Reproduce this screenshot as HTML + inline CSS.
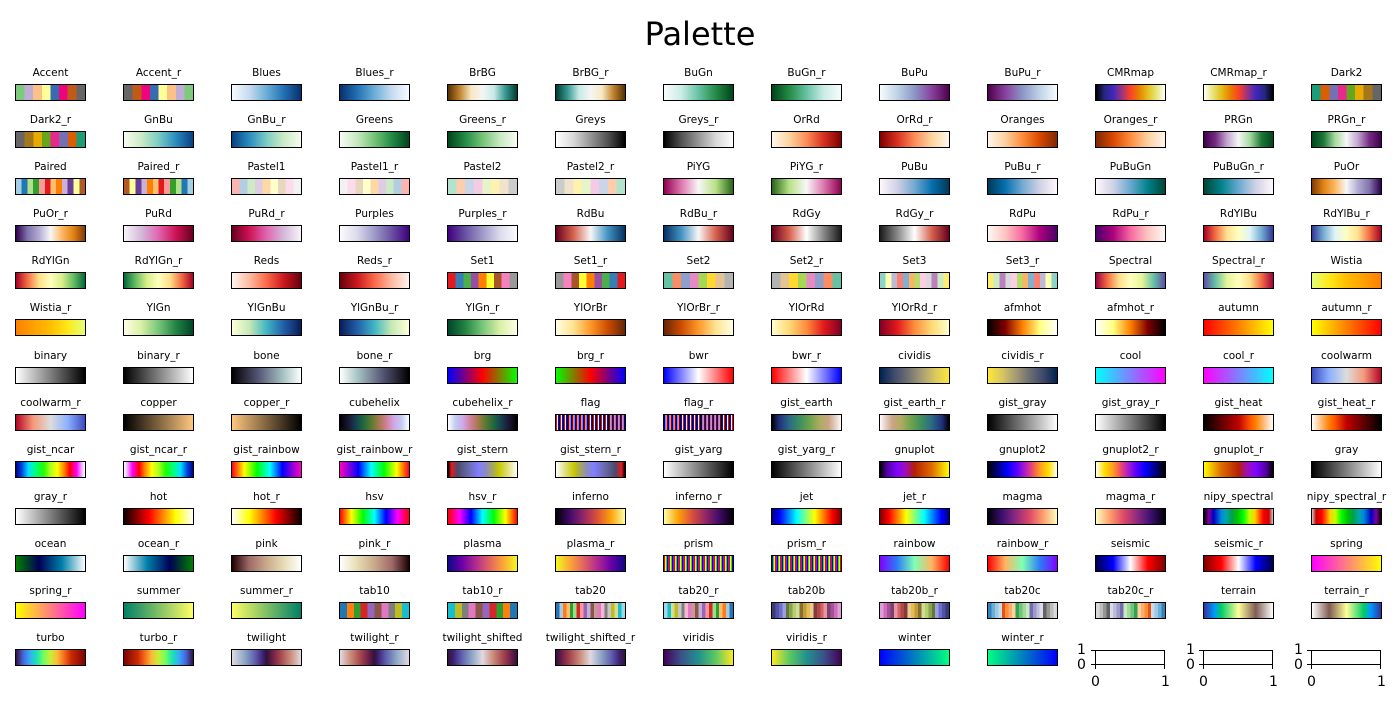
<!DOCTYPE html>
<html><head><meta charset="utf-8"><style>
body{margin:0;background:#fff;width:1400px;height:704px;overflow:hidden;position:relative;font-family:"DejaVu Sans","Liberation Sans",sans-serif;color:#000}
h1{position:absolute;top:14px;left:0;width:1400px;text-align:center;margin:0;font-weight:normal;font-size:32px;line-height:40px}
.g{position:absolute;left:-3.5px;top:60px;display:grid;grid-template-columns:repeat(13,108px);grid-auto-rows:47.1px}
.c{position:relative}
.c span{position:absolute;top:6px;left:0;width:108px;text-align:center;font-size:10.5px;line-height:14px;white-space:nowrap}
.c b{position:absolute;top:24px;left:18.5px;width:69px;height:15px;border:1px solid #000;overflow:hidden}
.c b i{position:absolute;inset:0}
.r i{transform:scaleX(-1)}
.Accent{background:linear-gradient(90deg,#7fc97f 0 12.5%,#beaed4 0 25%,#fdc086 0 37.5%,#ffff99 0 50%,#386cb0 0 62.5%,#f0027f 0 75%,#bf5b17 0 87.5%,#666 0)}
.Dark2{background:linear-gradient(90deg,#1b9e77 0 12.5%,#d95f02 0 25%,#7570b3 0 37.5%,#e7298a 0 50%,#66a61e 0 62.5%,#e6ab02 0 75%,#a6761d 0 87.5%,#666 0)}
.Paired{background:linear-gradient(90deg,#a6cee3 0 8.33%,#1f78b4 0 16.67%,#b2df8a 0 25%,#33a02c 0 33.3%,#fb9a99 0 41.67%,#e31a1c 0 50%,#fdbf6f 0 58.3%,#ff7f00 0 66.67%,#cab2d6 0 75%,#6a3d9a 0 83.3%,#ffff99 0 91.67%,#b15928 0)}
.Pastel1{background:linear-gradient(90deg,#fbb4ae 0 11.1%,#b3cde3 0 22.2%,#ccebc5 0 33.3%,#decbe4 0 44.4%,#fed9a6 0 55.6%,#ffffcc 0 66.7%,#e5d8bd 0 77.8%,#fddaec 0 88.9%,#f2f2f2 0)}
.Pastel2{background:linear-gradient(90deg,#b3e2cd 0 12.5%,#fdcdac 0 25%,#cbd5e8 0 37.5%,#f4cae4 0 50%,#e6f5c9 0 62.5%,#fff2ae 0 75%,#f1e2cc 0 87.5%,#ccc 0)}
.Set1{background:linear-gradient(90deg,#e41a1c 0 11.1%,#377eb8 0 22.2%,#4daf4a 0 33.3%,#984ea3 0 44.4%,#ff7f00 0 55.6%,#ffff33 0 66.7%,#a65628 0 77.8%,#f781bf 0 88.9%,#999 0)}
.Set2{background:linear-gradient(90deg,#66c2a5 0 12.5%,#fc8d62 0 25%,#8da0cb 0 37.5%,#e78ac3 0 50%,#a6d854 0 62.5%,#ffd92f 0 75%,#e5c494 0 87.5%,#b3b3b3 0)}
.Set3{background:linear-gradient(90deg,#8dd3c7 0 8.33%,#ffffb3 0 16.67%,#bebada 0 25%,#fb8072 0 33.3%,#80b1d3 0 41.67%,#fdb462 0 50%,#b3de69 0 58.3%,#fccde5 0 66.67%,#d9d9d9 0 75%,#bc80bd 0 83.3%,#ccebc5 0 91.67%,#ffed6f 0)}
.tab10{background:linear-gradient(90deg,#1f77b4 0 10%,#ff7f0e 0 20%,#2ca02c 0 30%,#d62728 0 40%,#9467bd 0 50%,#8c564b 0 60%,#e377c2 0 70%,#7f7f7f 0 80%,#bcbd22 0 90%,#17becf 0)}
.tab20{background:linear-gradient(90deg,#1f77b4 0 5%,#aec7e8 0 10%,#ff7f0e 0 15%,#ffbb78 0 20%,#2ca02c 0 25%,#98df8a 0 30%,#d62728 0 35%,#ff9896 0 40%,#9467bd 0 45%,#c5b0d5 0 50%,#8c564b 0 55%,#c49c94 0 60%,#e377c2 0 65%,#f7b6d2 0 70%,#7f7f7f 0 75%,#c7c7c7 0 80%,#bcbd22 0 85%,#dbdb8d 0 90%,#17becf 0 95%,#9edae5 0)}
.tab20b{background:linear-gradient(90deg,#393b79 0 5%,#5254a3 0 10%,#6b6ecf 0 15%,#9c9ede 0 20%,#637939 0 25%,#8ca252 0 30%,#b5cf6b 0 35%,#cedb9c 0 40%,#8c6d31 0 45%,#bd9e39 0 50%,#e7ba52 0 55%,#e7cb94 0 60%,#843c39 0 65%,#ad494a 0 70%,#d6616b 0 75%,#e7969c 0 80%,#7b4173 0 85%,#a55194 0 90%,#ce6dbd 0 95%,#de9ed6 0)}
.tab20c{background:linear-gradient(90deg,#3182bd 0 5%,#6baed6 0 10%,#9ecae1 0 15%,#c6dbef 0 20%,#e6550d 0 25%,#fd8d3c 0 30%,#fdae6b 0 35%,#fdd0a2 0 40%,#31a354 0 45%,#74c476 0 50%,#a1d99b 0 55%,#c7e9c0 0 60%,#756bb1 0 65%,#9e9ac8 0 70%,#bcbddc 0 75%,#dadaeb 0 80%,#636363 0 85%,#969696 0 90%,#bdbdbd 0 95%,#d9d9d9 0)}
.Blues{background:linear-gradient(90deg,#f7fbff,#c6dbef,#6baed6,#2171b5,#08306b)}
.BrBG{background:linear-gradient(90deg,#543005,#bf812d,#f6e8c3,#f5f5f5,#c7eae5,#35978f,#003c30)}
.BuGn{background:linear-gradient(90deg,#f7fcfd,#ccece6,#66c2a4,#238b45,#00441b)}
.BuPu{background:linear-gradient(90deg,#f7fcfd,#bfd3e6,#8c96c6,#88419d,#4d004b)}
.CMRmap{background:linear-gradient(90deg,#000,#26267f 12%,#4026bf 25%,#9933 80 37%,#ff4026 50%,#e68000 62%,#e6bf1a 75%,#e6e680 88%,#fff)}
.CMRmap{background:linear-gradient(90deg,#000,#26267f 12%,#4026bf 25%,#993380 37%,#ff4026 50%,#e68000 62%,#e6bf1a 75%,#e6e680 88%,#fff)}
.GnBu{background:linear-gradient(90deg,#f7fcf0,#ccebc5,#7bccc4,#2b8cbe,#084081)}
.Greens{background:linear-gradient(90deg,#f7fcf5,#c7e9c0,#74c476,#238b45,#00441b)}
.Greys{background:linear-gradient(90deg,#fff,#d9d9d9,#969696,#525252,#000)}
.OrRd{background:linear-gradient(90deg,#fff7ec,#fdd49e,#fc8d59,#d7301f,#7f0000)}
.Oranges{background:linear-gradient(90deg,#fff5eb,#fdd0a2,#fd8d3c,#d94801,#7f2704)}
.PRGn{background:linear-gradient(90deg,#40004b,#762a83,#c2a5cf,#f7f7f7,#a6dba0,#1b7837,#00441b)}
.PiYG{background:linear-gradient(90deg,#8e0152,#de77ae,#f7f7f7,#b8e186,#276419)}
.PuBu{background:linear-gradient(90deg,#fff7fb,#d0d1e6,#74a9cf,#0570b0,#023858)}
.PuBuGn{background:linear-gradient(90deg,#fff7fb,#d0d1e6,#67a9cf,#02818a,#014636)}
.PuOr{background:linear-gradient(90deg,#7f3b08,#e08214,#fdb863,#f7f7f7,#b2abd2,#8073ac,#2d004b)}
.PuRd{background:linear-gradient(90deg,#f7f4f9,#d4b9da,#df65b0,#ce1256,#67001f)}
.Purples{background:linear-gradient(90deg,#fcfbfd,#dadaeb,#9e9ac8,#6a51a3,#3f007d)}
.RdBu{background:linear-gradient(90deg,#67001f,#d6604d,#f7f7f7,#4393c3,#053061)}
.RdGy{background:linear-gradient(90deg,#67001f,#d6604d,#fff,#878787,#1a1a1a)}
.RdPu{background:linear-gradient(90deg,#fff7f3,#fcc5c0,#f768a1,#ae017e,#49006a)}
.RdYlBu{background:linear-gradient(90deg,#a50026,#f46d43,#fee090,#ffffbf,#e0f3f8,#74add1,#313695)}
.RdYlGn{background:linear-gradient(90deg,#a50026,#f46d43,#fee08b,#ffffbf,#d9ef8b,#66bd63,#006837)}
.Reds{background:linear-gradient(90deg,#fff5f0,#fcbba1,#fb6a4a,#cb181d,#67000d)}
.Spectral{background:linear-gradient(90deg,#9e0142,#f46d43,#fee08b,#ffffbf,#e6f598,#66c2a5,#5e4fa2)}
.Wistia{background:linear-gradient(90deg,#e4ff7a,#ffe81a,#ffbd00,#ffa000,#fc7f00)}
.YlGn{background:linear-gradient(90deg,#ffffe5,#d9f0a3,#78c679,#238443,#004529)}
.YlGnBu{background:linear-gradient(90deg,#ffffd9,#c7e9b4,#41b6c4,#225ea8,#081d58)}
.YlOrBr{background:linear-gradient(90deg,#ffffe5,#fee391,#fe9929,#cc4c02,#662506)}
.YlOrRd{background:linear-gradient(90deg,#ffffcc,#fed976,#fd8d3c,#e31a1c,#800026)}
.afmhot{background:linear-gradient(90deg,#000,#800000 25%,#ff8000 50%,#ffff80 75%,#fff)}
.autumn{background:linear-gradient(90deg,#f00,#ff0)}
.binary{background:linear-gradient(90deg,#fff,#000)}
.bone{background:linear-gradient(90deg,#000,#545474 37.5%,#a8c5c5 75%,#fff)}
.brg{background:linear-gradient(90deg,#00f,#f00,#0f0)}
.bwr{background:linear-gradient(90deg,#00f,#fff,#f00)}
.cividis{background:linear-gradient(90deg,#00224e,#3d4a6c,#6f6f72,#a59c74,#d9c85f,#fee838)}
.cool{background:linear-gradient(90deg,#0ff,#f0f)}
.coolwarm{background:linear-gradient(90deg,#3b4cc0,#8db0fe,#dddddd,#f49a7b,#b40426)}
.copper{background:linear-gradient(90deg,#000,#ffc77f)}
.cubehelix{background:linear-gradient(90deg,#000,#1a1530,#163d4e,#1f6642,#54792f,#a07949,#d07e93,#cfa6e5,#c1caf3,#fff)}
.flag{background:repeating-linear-gradient(90deg,#f00 0 1px,#fff 1px 2px,#00f 2px 3px,#000 3px 4.1px)}
.gist_earth{background:linear-gradient(90deg,#000,#1f2f7a 10%,#2a6a86 25%,#3d8f5e 40%,#6ea34c 55%,#b0ac62 70%,#c9a484 82%,#e8d4cc 93%,#fdfbfb)}
.gist_gray{background:linear-gradient(90deg,#000,#fff)}
.gist_heat{background:linear-gradient(90deg,#000,#bf0000 50%,#ff5500 67%,#ff8000 75%,#fff)}
.gist_ncar{background:linear-gradient(90deg,#000080,#0040e0 8%,#00e0ff 18%,#00ff80 28%,#20ff00 40%,#b0ff20 50%,#ffff00 60%,#ff8000 70%,#ff0000 78%,#ff00ff 88%,#f0c0ff 96%,#fff)}
.gist_rainbow{background:linear-gradient(90deg,#ff0029,#ff8000 9%,#ff0 18%,#0f0 36%,#0ff 55%,#00f 73%,#ff00bf)}
.gist_stern{background:linear-gradient(90deg,#000,#e41a1c 5%,#4a4a6a 14%,#6a6ab0 30%,#8080ff 45%,#8c8cc0 55%,#b0b040 68%,#c8c800 74%,#e0e080 87%,#fff)}
.gist_yarg{background:linear-gradient(90deg,#fff,#000)}
.gnuplot{background:linear-gradient(90deg,#000,#5100a0 10%,#8004ff 25%,#a010b0 38%,#b52000 50%,#dd6c00 75%,#ff0)}
.gnuplot2{background:linear-gradient(90deg,#000,#0000ff 28%,#5a00ff 42%,#b820c0 55%,#f05060 65%,#ff9a20 75%,#ffe000 88%,#fff)}
.gray{background:linear-gradient(90deg,#000,#fff)}
.hot{background:linear-gradient(90deg,#0a0000,#f00 36.5%,#ff0 74.6%,#fff)}
.hsv{background:linear-gradient(90deg,#f00,#ff0 16.7%,#0f0 33.3%,#0ff 50%,#00f 66.7%,#f0f 83.3%,#f00)}
.inferno{background:linear-gradient(90deg,#000004,#420a68,#932667,#dd513a,#fca50a,#fcffa4)}
.jet{background:linear-gradient(90deg,#000080,#00f 11%,#0ff 36%,#ff0 62%,#f00 87%,#800000)}
.magma{background:linear-gradient(90deg,#000004,#3b0f70,#8c2981,#de4968,#fe9f6d,#fcfdbf)}
.nipy_spectral{background:linear-gradient(90deg,#000,#8000a0 7%,#0000c0 14%,#0088dd 25%,#00a8a8 32%,#00a050 40%,#00c000 48%,#00ff00 57%,#c0ff00 66%,#ffd000 74%,#ff6000 80%,#f00 86%,#c00 94%,#ccc)}
.ocean{background:linear-gradient(90deg,#008000,#000055 33.3%,#0080aa 66.7%,#fff)}
.pink{background:linear-gradient(90deg,#1e0000,#a06a6a 25%,#c9a98a 50%,#e6dcb4 75%,#fff)}
.plasma{background:linear-gradient(90deg,#0d0887,#6a00a8,#b12a90,#e16462,#fca636,#f0f921)}
.prism{background:repeating-linear-gradient(90deg,#f00 0 1px,#ff0 1px 2px,#0f0 2px 3px,#00f 3px 4px,#a0f 4px 5px)}
.rainbow{background:linear-gradient(90deg,#8000ff,#2c7ef7 25%,#80ffb4 50%,#ffb462 75%,#f00)}
.seismic{background:linear-gradient(90deg,#00004c,#00f 25%,#fff 50%,#f00 75%,#800000)}
.spring{background:linear-gradient(90deg,#f0f,#ff0)}
.summer{background:linear-gradient(90deg,#008066,#ffff66)}
.terrain{background:linear-gradient(90deg,#333399,#0099ff 15%,#00cc66 25%,#ffff99 50%,#805c54 75%,#fff)}
.turbo{background:linear-gradient(90deg,#30123b,#4662d7 10%,#36aaf9 20%,#1ae4b6 30%,#72fe5e 40%,#c8ef34 50%,#faba39 60%,#f66b19 70%,#ca2a04 80%,#7a0403)}
.twilight{background:linear-gradient(90deg,#e2d9e2,#8fa8c6 18%,#6061b0 33%,#3e2075 45%,#2f1436 50%,#6a1c49 58%,#a5454e 70%,#cb8e7a 85%,#e2d9e2)}
.twilight_shifted{background:linear-gradient(90deg,#2f1436,#3e2075 8%,#6061b0 20%,#8fa8c6 35%,#e2d9e2 50%,#cb8e7a 65%,#a5454e 80%,#6a1c49 92%,#2f1436)}
.viridis{background:linear-gradient(90deg,#440154,#3b528b,#21918c,#5ec962,#fde725)}
.winter{background:linear-gradient(90deg,#00f,#00ff80)}
.ax{position:absolute;top:650px;width:70px;height:15px;border:1px solid #000;box-sizing:border-box}
.ax::before,.ax::after{content:"";position:absolute}
.tk{position:absolute;background:#000}
.tl{position:absolute;font-size:14px;line-height:14px}
</style></head><body>
<h1>Palette</h1>
<div class="g">
<div class="c"><span>Accent</span><b><i class="Accent"></i></b></div>
<div class="c"><span>Accent_r</span><b class="r"><i class="Accent"></i></b></div>
<div class="c"><span>Blues</span><b><i class="Blues"></i></b></div>
<div class="c"><span>Blues_r</span><b class="r"><i class="Blues"></i></b></div>
<div class="c"><span>BrBG</span><b><i class="BrBG"></i></b></div>
<div class="c"><span>BrBG_r</span><b class="r"><i class="BrBG"></i></b></div>
<div class="c"><span>BuGn</span><b><i class="BuGn"></i></b></div>
<div class="c"><span>BuGn_r</span><b class="r"><i class="BuGn"></i></b></div>
<div class="c"><span>BuPu</span><b><i class="BuPu"></i></b></div>
<div class="c"><span>BuPu_r</span><b class="r"><i class="BuPu"></i></b></div>
<div class="c"><span>CMRmap</span><b><i class="CMRmap"></i></b></div>
<div class="c"><span>CMRmap_r</span><b class="r"><i class="CMRmap"></i></b></div>
<div class="c"><span>Dark2</span><b><i class="Dark2"></i></b></div>

<div class="c"><span>Dark2_r</span><b class="r"><i class="Dark2"></i></b></div>
<div class="c"><span>GnBu</span><b><i class="GnBu"></i></b></div>
<div class="c"><span>GnBu_r</span><b class="r"><i class="GnBu"></i></b></div>
<div class="c"><span>Greens</span><b><i class="Greens"></i></b></div>
<div class="c"><span>Greens_r</span><b class="r"><i class="Greens"></i></b></div>
<div class="c"><span>Greys</span><b><i class="Greys"></i></b></div>
<div class="c"><span>Greys_r</span><b class="r"><i class="Greys"></i></b></div>
<div class="c"><span>OrRd</span><b><i class="OrRd"></i></b></div>
<div class="c"><span>OrRd_r</span><b class="r"><i class="OrRd"></i></b></div>
<div class="c"><span>Oranges</span><b><i class="Oranges"></i></b></div>
<div class="c"><span>Oranges_r</span><b class="r"><i class="Oranges"></i></b></div>
<div class="c"><span>PRGn</span><b><i class="PRGn"></i></b></div>
<div class="c"><span>PRGn_r</span><b class="r"><i class="PRGn"></i></b></div>

<div class="c"><span>Paired</span><b><i class="Paired"></i></b></div>
<div class="c"><span>Paired_r</span><b class="r"><i class="Paired"></i></b></div>
<div class="c"><span>Pastel1</span><b><i class="Pastel1"></i></b></div>
<div class="c"><span>Pastel1_r</span><b class="r"><i class="Pastel1"></i></b></div>
<div class="c"><span>Pastel2</span><b><i class="Pastel2"></i></b></div>
<div class="c"><span>Pastel2_r</span><b class="r"><i class="Pastel2"></i></b></div>
<div class="c"><span>PiYG</span><b><i class="PiYG"></i></b></div>
<div class="c"><span>PiYG_r</span><b class="r"><i class="PiYG"></i></b></div>
<div class="c"><span>PuBu</span><b><i class="PuBu"></i></b></div>
<div class="c"><span>PuBu_r</span><b class="r"><i class="PuBu"></i></b></div>
<div class="c"><span>PuBuGn</span><b><i class="PuBuGn"></i></b></div>
<div class="c"><span>PuBuGn_r</span><b class="r"><i class="PuBuGn"></i></b></div>
<div class="c"><span>PuOr</span><b><i class="PuOr"></i></b></div>

<div class="c"><span>PuOr_r</span><b class="r"><i class="PuOr"></i></b></div>
<div class="c"><span>PuRd</span><b><i class="PuRd"></i></b></div>
<div class="c"><span>PuRd_r</span><b class="r"><i class="PuRd"></i></b></div>
<div class="c"><span>Purples</span><b><i class="Purples"></i></b></div>
<div class="c"><span>Purples_r</span><b class="r"><i class="Purples"></i></b></div>
<div class="c"><span>RdBu</span><b><i class="RdBu"></i></b></div>
<div class="c"><span>RdBu_r</span><b class="r"><i class="RdBu"></i></b></div>
<div class="c"><span>RdGy</span><b><i class="RdGy"></i></b></div>
<div class="c"><span>RdGy_r</span><b class="r"><i class="RdGy"></i></b></div>
<div class="c"><span>RdPu</span><b><i class="RdPu"></i></b></div>
<div class="c"><span>RdPu_r</span><b class="r"><i class="RdPu"></i></b></div>
<div class="c"><span>RdYlBu</span><b><i class="RdYlBu"></i></b></div>
<div class="c"><span>RdYlBu_r</span><b class="r"><i class="RdYlBu"></i></b></div>

<div class="c"><span>RdYlGn</span><b><i class="RdYlGn"></i></b></div>
<div class="c"><span>RdYlGn_r</span><b class="r"><i class="RdYlGn"></i></b></div>
<div class="c"><span>Reds</span><b><i class="Reds"></i></b></div>
<div class="c"><span>Reds_r</span><b class="r"><i class="Reds"></i></b></div>
<div class="c"><span>Set1</span><b><i class="Set1"></i></b></div>
<div class="c"><span>Set1_r</span><b class="r"><i class="Set1"></i></b></div>
<div class="c"><span>Set2</span><b><i class="Set2"></i></b></div>
<div class="c"><span>Set2_r</span><b class="r"><i class="Set2"></i></b></div>
<div class="c"><span>Set3</span><b><i class="Set3"></i></b></div>
<div class="c"><span>Set3_r</span><b class="r"><i class="Set3"></i></b></div>
<div class="c"><span>Spectral</span><b><i class="Spectral"></i></b></div>
<div class="c"><span>Spectral_r</span><b class="r"><i class="Spectral"></i></b></div>
<div class="c"><span>Wistia</span><b><i class="Wistia"></i></b></div>

<div class="c"><span>Wistia_r</span><b class="r"><i class="Wistia"></i></b></div>
<div class="c"><span>YlGn</span><b><i class="YlGn"></i></b></div>
<div class="c"><span>YlGnBu</span><b><i class="YlGnBu"></i></b></div>
<div class="c"><span>YlGnBu_r</span><b class="r"><i class="YlGnBu"></i></b></div>
<div class="c"><span>YlGn_r</span><b class="r"><i class="YlGn"></i></b></div>
<div class="c"><span>YlOrBr</span><b><i class="YlOrBr"></i></b></div>
<div class="c"><span>YlOrBr_r</span><b class="r"><i class="YlOrBr"></i></b></div>
<div class="c"><span>YlOrRd</span><b><i class="YlOrRd"></i></b></div>
<div class="c"><span>YlOrRd_r</span><b class="r"><i class="YlOrRd"></i></b></div>
<div class="c"><span>afmhot</span><b><i class="afmhot"></i></b></div>
<div class="c"><span>afmhot_r</span><b class="r"><i class="afmhot"></i></b></div>
<div class="c"><span>autumn</span><b><i class="autumn"></i></b></div>
<div class="c"><span>autumn_r</span><b class="r"><i class="autumn"></i></b></div>

<div class="c"><span>binary</span><b><i class="binary"></i></b></div>
<div class="c"><span>binary_r</span><b class="r"><i class="binary"></i></b></div>
<div class="c"><span>bone</span><b><i class="bone"></i></b></div>
<div class="c"><span>bone_r</span><b class="r"><i class="bone"></i></b></div>
<div class="c"><span>brg</span><b><i class="brg"></i></b></div>
<div class="c"><span>brg_r</span><b class="r"><i class="brg"></i></b></div>
<div class="c"><span>bwr</span><b><i class="bwr"></i></b></div>
<div class="c"><span>bwr_r</span><b class="r"><i class="bwr"></i></b></div>
<div class="c"><span>cividis</span><b><i class="cividis"></i></b></div>
<div class="c"><span>cividis_r</span><b class="r"><i class="cividis"></i></b></div>
<div class="c"><span>cool</span><b><i class="cool"></i></b></div>
<div class="c"><span>cool_r</span><b class="r"><i class="cool"></i></b></div>
<div class="c"><span>coolwarm</span><b><i class="coolwarm"></i></b></div>

<div class="c"><span>coolwarm_r</span><b class="r"><i class="coolwarm"></i></b></div>
<div class="c"><span>copper</span><b><i class="copper"></i></b></div>
<div class="c"><span>copper_r</span><b class="r"><i class="copper"></i></b></div>
<div class="c"><span>cubehelix</span><b><i class="cubehelix"></i></b></div>
<div class="c"><span>cubehelix_r</span><b class="r"><i class="cubehelix"></i></b></div>
<div class="c"><span>flag</span><b><i class="flag"></i></b></div>
<div class="c"><span>flag_r</span><b class="r"><i class="flag"></i></b></div>
<div class="c"><span>gist_earth</span><b><i class="gist_earth"></i></b></div>
<div class="c"><span>gist_earth_r</span><b class="r"><i class="gist_earth"></i></b></div>
<div class="c"><span>gist_gray</span><b><i class="gist_gray"></i></b></div>
<div class="c"><span>gist_gray_r</span><b class="r"><i class="gist_gray"></i></b></div>
<div class="c"><span>gist_heat</span><b><i class="gist_heat"></i></b></div>
<div class="c"><span>gist_heat_r</span><b class="r"><i class="gist_heat"></i></b></div>

<div class="c"><span>gist_ncar</span><b><i class="gist_ncar"></i></b></div>
<div class="c"><span>gist_ncar_r</span><b class="r"><i class="gist_ncar"></i></b></div>
<div class="c"><span>gist_rainbow</span><b><i class="gist_rainbow"></i></b></div>
<div class="c"><span>gist_rainbow_r</span><b class="r"><i class="gist_rainbow"></i></b></div>
<div class="c"><span>gist_stern</span><b><i class="gist_stern"></i></b></div>
<div class="c"><span>gist_stern_r</span><b class="r"><i class="gist_stern"></i></b></div>
<div class="c"><span>gist_yarg</span><b><i class="gist_yarg"></i></b></div>
<div class="c"><span>gist_yarg_r</span><b class="r"><i class="gist_yarg"></i></b></div>
<div class="c"><span>gnuplot</span><b><i class="gnuplot"></i></b></div>
<div class="c"><span>gnuplot2</span><b><i class="gnuplot2"></i></b></div>
<div class="c"><span>gnuplot2_r</span><b class="r"><i class="gnuplot2"></i></b></div>
<div class="c"><span>gnuplot_r</span><b class="r"><i class="gnuplot"></i></b></div>
<div class="c"><span>gray</span><b><i class="gray"></i></b></div>

<div class="c"><span>gray_r</span><b class="r"><i class="gray"></i></b></div>
<div class="c"><span>hot</span><b><i class="hot"></i></b></div>
<div class="c"><span>hot_r</span><b class="r"><i class="hot"></i></b></div>
<div class="c"><span>hsv</span><b><i class="hsv"></i></b></div>
<div class="c"><span>hsv_r</span><b class="r"><i class="hsv"></i></b></div>
<div class="c"><span>inferno</span><b><i class="inferno"></i></b></div>
<div class="c"><span>inferno_r</span><b class="r"><i class="inferno"></i></b></div>
<div class="c"><span>jet</span><b><i class="jet"></i></b></div>
<div class="c"><span>jet_r</span><b class="r"><i class="jet"></i></b></div>
<div class="c"><span>magma</span><b><i class="magma"></i></b></div>
<div class="c"><span>magma_r</span><b class="r"><i class="magma"></i></b></div>
<div class="c"><span>nipy_spectral</span><b><i class="nipy_spectral"></i></b></div>
<div class="c"><span>nipy_spectral_r</span><b class="r"><i class="nipy_spectral"></i></b></div>

<div class="c"><span>ocean</span><b><i class="ocean"></i></b></div>
<div class="c"><span>ocean_r</span><b class="r"><i class="ocean"></i></b></div>
<div class="c"><span>pink</span><b><i class="pink"></i></b></div>
<div class="c"><span>pink_r</span><b class="r"><i class="pink"></i></b></div>
<div class="c"><span>plasma</span><b><i class="plasma"></i></b></div>
<div class="c"><span>plasma_r</span><b class="r"><i class="plasma"></i></b></div>
<div class="c"><span>prism</span><b><i class="prism"></i></b></div>
<div class="c"><span>prism_r</span><b class="r"><i class="prism"></i></b></div>
<div class="c"><span>rainbow</span><b><i class="rainbow"></i></b></div>
<div class="c"><span>rainbow_r</span><b class="r"><i class="rainbow"></i></b></div>
<div class="c"><span>seismic</span><b><i class="seismic"></i></b></div>
<div class="c"><span>seismic_r</span><b class="r"><i class="seismic"></i></b></div>
<div class="c"><span>spring</span><b><i class="spring"></i></b></div>

<div class="c"><span>spring_r</span><b class="r"><i class="spring"></i></b></div>
<div class="c"><span>summer</span><b><i class="summer"></i></b></div>
<div class="c"><span>summer_r</span><b class="r"><i class="summer"></i></b></div>
<div class="c"><span>tab10</span><b><i class="tab10"></i></b></div>
<div class="c"><span>tab10_r</span><b class="r"><i class="tab10"></i></b></div>
<div class="c"><span>tab20</span><b><i class="tab20"></i></b></div>
<div class="c"><span>tab20_r</span><b class="r"><i class="tab20"></i></b></div>
<div class="c"><span>tab20b</span><b><i class="tab20b"></i></b></div>
<div class="c"><span>tab20b_r</span><b class="r"><i class="tab20b"></i></b></div>
<div class="c"><span>tab20c</span><b><i class="tab20c"></i></b></div>
<div class="c"><span>tab20c_r</span><b class="r"><i class="tab20c"></i></b></div>
<div class="c"><span>terrain</span><b><i class="terrain"></i></b></div>
<div class="c"><span>terrain_r</span><b class="r"><i class="terrain"></i></b></div>

<div class="c"><span>turbo</span><b><i class="turbo"></i></b></div>
<div class="c"><span>turbo_r</span><b class="r"><i class="turbo"></i></b></div>
<div class="c"><span>twilight</span><b><i class="twilight"></i></b></div>
<div class="c"><span>twilight_r</span><b class="r"><i class="twilight"></i></b></div>
<div class="c"><span>twilight_shifted</span><b><i class="twilight_shifted"></i></b></div>
<div class="c"><span>twilight_shifted_r</span><b class="r"><i class="twilight_shifted"></i></b></div>
<div class="c"><span>viridis</span><b><i class="viridis"></i></b></div>
<div class="c"><span>viridis_r</span><b class="r"><i class="viridis"></i></b></div>
<div class="c"><span>winter</span><b><i class="winter"></i></b></div>
<div class="c"><span>winter_r</span><b class="r"><i class="winter"></i></b></div>
</div>

<!-- empty axes -->
<div class="ax" style="left:1095px"></div>
<div class="tk" style="left:1091px;top:650px;width:4px;height:1px"></div>
<div class="tk" style="left:1091px;top:664px;width:4px;height:1px"></div>
<div class="tk" style="left:1095px;top:665px;width:1px;height:4px"></div>
<div class="tk" style="left:1164px;top:665px;width:1px;height:4px"></div>
<div class="tl" style="left:1077px;top:643px">1</div>
<div class="tl" style="left:1077px;top:658px">0</div>
<div class="tl" style="left:1091px;top:675px">0</div>
<div class="tl" style="left:1161px;top:675px">1</div>

<div class="ax" style="left:1203px"></div>
<div class="tk" style="left:1199px;top:650px;width:4px;height:1px"></div>
<div class="tk" style="left:1199px;top:664px;width:4px;height:1px"></div>
<div class="tk" style="left:1203px;top:665px;width:1px;height:4px"></div>
<div class="tk" style="left:1272px;top:665px;width:1px;height:4px"></div>
<div class="tl" style="left:1186px;top:643px">1</div>
<div class="tl" style="left:1186px;top:658px">0</div>
<div class="tl" style="left:1199px;top:675px">0</div>
<div class="tl" style="left:1269px;top:675px">1</div>

<div class="ax" style="left:1311px"></div>
<div class="tk" style="left:1307px;top:650px;width:4px;height:1px"></div>
<div class="tk" style="left:1307px;top:664px;width:4px;height:1px"></div>
<div class="tk" style="left:1311px;top:665px;width:1px;height:4px"></div>
<div class="tk" style="left:1380px;top:665px;width:1px;height:4px"></div>
<div class="tl" style="left:1294px;top:643px">1</div>
<div class="tl" style="left:1294px;top:658px">0</div>
<div class="tl" style="left:1307px;top:675px">0</div>
<div class="tl" style="left:1377px;top:675px">1</div>
</body></html>
